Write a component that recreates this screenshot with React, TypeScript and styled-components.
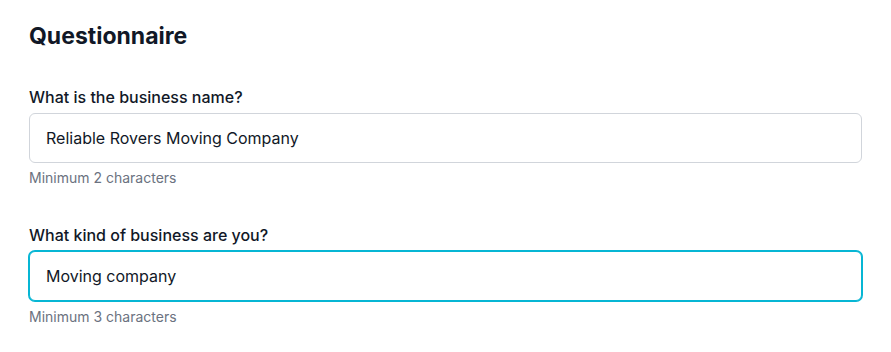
import styled, { createGlobalStyle } from "styled-components";

const GlobalStyle = createGlobalStyle`
  body {
    margin: 0;
    background: #ffffff;
    font-family: Inter, "Noto Sans", sans-serif;
    color: #111827;
  }
`;

const Page = styled.div`
  padding: 20px 29px 0 29px;
  width: 833px;
`;

const Title = styled.h1`
  margin: 0 0 35px 0;
  font-size: 23px;
  line-height: 32px;
  font-weight: 700;
  color: #111827;
`;

const Field = styled.div`
  display: flex;
  flex-direction: column;
  margin-bottom: 37px;
`;

const Label = styled.label`
  font-size: 16px;
  line-height: 20px;
  font-weight: 500;
  color: #111827;
  margin-bottom: 6px;
`;

const Input = styled.input<{ $focused?: boolean }>`
  box-sizing: border-box;
  height: 50px;
  width: 100%;
  padding: 0 16px;
  font-family: Inter, "Noto Sans", sans-serif;
  font-size: 16px;
  color: #111827;
  background: #ffffff;
  border: 1px solid ${(p) => (p.$focused ? "#06b6d4" : "#d1d5db")};
  box-shadow: ${(p) => (p.$focused ? "0 0 0 1px #06b6d4" : "none")};
  border-radius: 6px;
  outline: none;
`;

const Help = styled.div<{ $gap?: number }>`
  margin-top: ${(p) => p.$gap ?? 5}px;
  font-size: 14px;
  line-height: 20px;
  color: #6b7280;
`;

export default function App() {
  return (
    <>
      <GlobalStyle />
      <Page>
        <Title>Questionnaire</Title>
        <Field>
          <Label>What is the business name?</Label>
          <Input defaultValue="Reliable Rovers Moving Company" />
          <Help>Minimum 2 characters</Help>
        </Field>
        <Field>
          <Label>What kind of business are you?</Label>
          <Input $focused defaultValue="Moving company" />
          <Help $gap={6}>Minimum 3 characters</Help>
        </Field>
      </Page>
    </>
  );
}
